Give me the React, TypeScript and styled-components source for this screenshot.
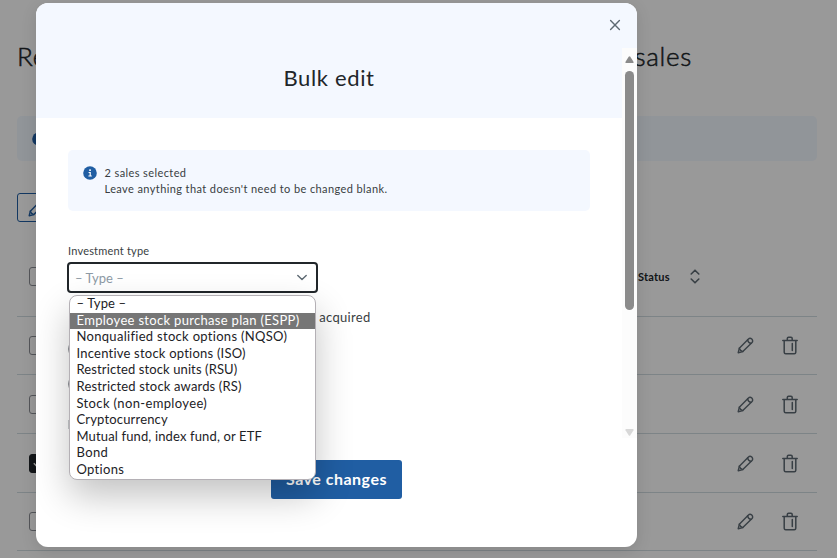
import React from "react";
import styled, { createGlobalStyle } from "styled-components";

const GlobalStyle = createGlobalStyle`
  *, *::before, *::after { box-sizing: border-box; }
  html, body { margin: 0; overflow: hidden; }
  body { font-family: Lato, "Liberation Sans", sans-serif; color: #21262a; background: #fff; }
  svg { display: block; flex: none; }
`;

const Screen = styled.div`
  position: relative;
  width: 837px;
  height: 558px;
  overflow: hidden;
`;

const Page = styled.main`
  display: flex;
  flex-direction: column;
  padding: 0 20px 0 17px;
`;

const PageTitle = styled.h1`
  display: flex;
  justify-content: space-between;
  width: 675px;
  height: 116px;
  margin: 0;
  padding-top: 39px;
  font-size: 26px;
  line-height: 34px;
  font-weight: 300;
  letter-spacing: 0.7px;
  -webkit-text-stroke: 0.5px #21262a;
`;

const PageNotice = styled.div`
  display: flex;
  align-items: center;
  height: 45px;
  padding-left: 15px;
  border-radius: 5px;
  background: #f2f8ff;
`;

const EditButton = styled.button`
  display: flex;
  align-items: center;
  width: 60px;
  height: 29px;
  margin: 32px 0 16px;
  padding: 2px 0 0 10px;
  border: 1px solid #205ea3;
  border-radius: 3px;
  background: transparent;
  color: #205ea3;
`;

const TableRow = styled.div<{ $height: number }>`
  display: flex;
  align-items: center;
  height: ${(p) => p.$height}px;
  padding: 0 19.5px 0 12px;
  border-bottom: 1px solid #d0dde1;
  color: #5e6a73;
`;

const TableHead = styled(TableRow)`
  padding-bottom: 1px;
`;

const Checkbox = styled.span<{ $checked?: boolean }>`
  display: flex;
  align-items: center;
  justify-content: center;
  width: 19px;
  height: 19px;
  border: 1px solid ${(p) => (p.$checked ? "#21262a" : "#8d9096")};
  border-radius: 3px;
  background: ${(p) => (p.$checked ? "#21262a" : "transparent")};
  color: #fff;
`;

const StatusHead = styled.div`
  display: flex;
  align-items: center;
  justify-content: space-between;
  width: 62px;
  margin-left: 590px;
  font-size: 11px;
  font-weight: 700;
  letter-spacing: 0.2px;
  color: #21262a;
`;

const RowActions = styled.div`
  display: flex;
  align-items: center;
  gap: 28px;
  margin-left: auto;
`;

const Backdrop = styled.div`
  position: absolute;
  inset: 0;
  padding: 3px 0 0 36px;
  background: rgba(0, 0, 0, 0.4);
`;

const Dialog = styled.section`
  display: flex;
  flex-direction: column;
  width: 601px;
  height: 544px;
  border-radius: 12px;
  overflow: hidden;
  background: #fff;
`;

const DialogShadow = styled.div`
  width: 601px;
  border-radius: 12px;
  box-shadow: 0 4px 16px rgba(0, 0, 0, 0.12);
`;

const DialogTop = styled.div`
  display: flex;
  justify-content: flex-end;
  height: 45px;
  padding: 15px 15px 0 0;
  background: #f4f8ff;
  color: #5e6a73;
`;

const DialogScroll = styled.div`
  display: grid;
  grid-template-columns: 586px 15px;
  height: 390px;
`;

const DialogTitle = styled.h2`
  height: 70px;
  margin: 0;
  padding-top: 15px;
  background: #f4f8ff;
  text-align: center;
  font-size: 22px;
  line-height: 30px;
  font-weight: 400;
  letter-spacing: 0.65px;
`;

const DialogBody = styled.div`
  display: flex;
  flex-direction: column;
  padding: 32px 32px 0;
`;

const Notice = styled.div`
  display: flex;
  gap: 7.5px;
  height: 61px;
  padding: 16px 15px 0;
  border-radius: 5px;
  background: #f4f8ff;
`;

const NoticeText = styled.p`
  margin: -1px 0 0;
  font-size: 11px;
  line-height: 16px;
  letter-spacing: 0.4px;
  color: #393e42;
`;

const FieldLabel = styled.label`
  margin-top: 33px;
  font-size: 11px;
  line-height: 14px;
  letter-spacing: 0.2px;
  color: #393e42;
`;

const SelectBox = styled.div`
  display: flex;
  align-items: center;
  justify-content: space-between;
  width: 251px;
  height: 31px;
  margin: 4px 0 0 -1px;
  padding: 0 9px 0 6px;
  border: 2px solid #21262a;
  border-radius: 4px;
  font-size: 13px;
  color: #8d9aa5;
`;

const Question = styled.p`
  width: 302.5px;
  margin: 16px 0 0;
  text-align: right;
  font-size: 13px;
  line-height: 16px;
  letter-spacing: 0.3px;
  color: #393e42;
`;

const RadioList = styled.div`
  display: flex;
  flex-direction: column;
  gap: 17px;
  margin-top: 15px;
`;

const Radio = styled.span`
  width: 18px;
  height: 18px;
  border: 1px solid #8d9096;
  border-radius: 50%;
`;

const DisabledField = styled.span`
  width: 120px;
  height: 9px;
  margin-top: 27px;
  border: 1px solid #c9cccf;
`;

const Scrollbar = styled.div`
  display: flex;
  flex-direction: column;
  align-items: center;
  padding-top: 8px;
  background: #fcfcfc;
`;

const Thumb = styled.span`
  width: 9px;
  height: 239px;
  margin: 8px 0 119px;
  border-radius: 5px;
  background: #8b8b8b;
`;

const DialogFooter = styled.div`
  display: flex;
  justify-content: center;
  padding-top: 22px;
`;

const SaveButton = styled.button`
  width: 131px;
  height: 39px;
  padding: 0 0 2px;
  border: 0;
  border-radius: 3px;
  background: #205ea3;
  color: #fff;
  font-family: inherit;
  font-size: 16px;
  font-weight: 700;
  letter-spacing: 0.5px;
`;

const OptionList = styled.ul`
  position: absolute;
  left: 69px;
  top: 295px;
  width: 247px;
  height: 185px;
  margin: 0;
  padding: 0;
  border: 1px solid #b4b0b5;
  border-radius: 8px;
  list-style: none;
  background: #fff;
  box-shadow: 0 16px 36px rgba(0, 0, 0, 0.24);
`;

const Option = styled.li<{ $active?: boolean; $track: number }>`
  height: 16.6px;
  padding-left: 6.5px;
  font-size: 13px;
  line-height: 15.6px;
  white-space: nowrap;
  letter-spacing: ${(p) => p.$track}px;
  background: ${(p) => (p.$active ? "#767676" : "transparent")};
  color: ${(p) => (p.$active ? "#fff" : "#1d2226")};
`;

const options: { label: string; track: number; active?: boolean }[] = [
  { label: "– Type –", track: 0.1 },
  { label: "Employee stock purchase plan (ESPP)", track: 0.31, active: true },
  { label: "Nonqualified stock options (NQSO)", track: 0.3 },
  { label: "Incentive stock options (ISO)", track: 0.22 },
  { label: "Restricted stock units (RSU)", track: 0.11 },
  { label: "Restricted stock awards (RS)", track: 0.16 },
  { label: "Stock (non-employee)", track: 0.36 },
  { label: "Cryptocurrency", track: 0.17 },
  { label: "Mutual fund, index fund, or ETF", track: 0.14 },
  { label: "Bond", track: 0.35 },
  { label: "Options", track: 0.3 },
];

const rows = [
  { height: 58, checked: false },
  { height: 59, checked: false },
  { height: 59, checked: true },
  { height: 58, checked: false },
];

const InfoIcon = () => (
  <svg width="14" height="14" viewBox="0 0 14 14">
    <circle cx="7" cy="7" r="6.8" fill="#205ea3" />
    <rect x="6.2" y="3.3" width="1.7" height="1.7" rx=".5" fill="#fff" />
    <path d="M5.6 6.5H7.2V10M5.4 10H8.8" fill="none" stroke="#fff" strokeWidth="1.2" />
  </svg>
);

const PencilIcon = () => (
  <svg width="17" height="17" viewBox="0 0 17 17" fill="none" stroke="currentColor" strokeWidth="1.4" strokeLinejoin="round" strokeLinecap="round">
    <path d="M1.2 15.7 2.3 11.3 11.2 2.2Q13 .5 14.8 2.1 16.5 3.9 14.8 5.8L5.8 14.6Z" />
    <path d="M10.6 2.8Q11 5.8 14.2 6.4M2.3 11.3Q3 14 5.8 14.6" />
  </svg>
);

const TrashIcon = () => (
  <svg width="16" height="19" viewBox="0 0 16 19" fill="none" stroke="currentColor" strokeWidth="1.5" strokeLinejoin="round" strokeLinecap="round">
    <path d="M.8 4.4H15.2M5.3 4.2V2.4Q5.3 1.2 6.5 1.2H9Q10.2 1.2 10.2 2.4V4.2M2.2 4.6V16.3Q2.2 17.8 3.7 17.8H12.3Q13.8 17.8 13.8 16.3V4.6M10.3 7.6V14.6" />
  </svg>
);

const SortIcon = () => (
  <svg width="10" height="15" viewBox="0 0 10 15" fill="none" stroke="#5e6a73" strokeWidth="1.6" strokeLinecap="round" strokeLinejoin="round">
    <path d="M1.2 5 5 1.2 8.8 5M1.2 10 5 13.8 8.8 10" />
  </svg>
);

const ChevronIcon = () => (
  <svg width="10" height="7" viewBox="0 0 10 7" fill="none" stroke="#5e6a73" strokeWidth="1.4" strokeLinecap="round" strokeLinejoin="round">
    <path d="M.8 1.4 5 5.6 9.2 1.4" />
  </svg>
);

const CloseIcon = () => (
  <svg width="14" height="14" viewBox="0 0 14 14" stroke="currentColor" strokeWidth="1.4" strokeLinecap="round">
    <path d="M2.6 2.6 11.4 11.4M11.4 2.6 2.6 11.4" />
  </svg>
);

const CheckIcon = () => (
  <svg width="11" height="9" viewBox="0 0 11 9" fill="none" stroke="currentColor" strokeWidth="1.4">
    <path d="M.8 4.2 4 7.4 10 1.2" />
  </svg>
);

const ArrowUp = () => (
  <svg width="9" height="7" viewBox="0 0 10 7" preserveAspectRatio="none" fill="#8b8b8b">
    <path d="M4.1.7Q5-.4 5.9.7L9.4 5.8Q9.8 7 8.8 7H1.2Q.2 7 .6 5.8Z" />
  </svg>
);

const ArrowDown = () => (
  <svg width="9" height="7" viewBox="0 0 10 7" preserveAspectRatio="none" fill="#d8d8d8">
    <path d="M4.1 6.3Q5 7.4 5.9 6.3L9.4 1.2Q9.8 0 8.8 0H1.2Q.2 0 .6 1.2Z" />
  </svg>
);

export default function App() {
  return (
    <Screen>
      <GlobalStyle />
      <Page>
        <PageTitle>
          <span>Review</span>
          <span>sales</span>
        </PageTitle>
        <PageNotice>
          <InfoIcon />
        </PageNotice>
        <EditButton aria-label="Edit">
          <PencilIcon />
        </EditButton>
        <TableHead $height={79}>
          <Checkbox />
          <StatusHead>
            Status
            <SortIcon />
          </StatusHead>
        </TableHead>
        {rows.map((row, i) => (
          <TableRow key={i} $height={row.height}>
            <Checkbox $checked={row.checked}>{row.checked && <CheckIcon />}</Checkbox>
            <RowActions>
              <PencilIcon />
              <TrashIcon />
            </RowActions>
          </TableRow>
        ))}
      </Page>
      <Backdrop>
        <DialogShadow>
          <Dialog>
            <DialogTop>
              <CloseIcon />
            </DialogTop>
            <DialogScroll>
              <div>
                <DialogTitle>Bulk edit</DialogTitle>
                <DialogBody>
                  <Notice>
                    <InfoIcon />
                    <NoticeText>
                      2 sales selected
                      <br />
                      Leave anything that doesn't need to be changed blank.
                    </NoticeText>
                  </Notice>
                  <FieldLabel>Investment type</FieldLabel>
                  <SelectBox>
                    – Type –
                    <ChevronIcon />
                  </SelectBox>
                  <Question>acquired</Question>
                  <RadioList>
                    <Radio />
                    <Radio />
                  </RadioList>
                  <DisabledField />
                </DialogBody>
              </div>
              <Scrollbar>
                <ArrowUp />
                <Thumb />
                <ArrowDown />
              </Scrollbar>
            </DialogScroll>
            <DialogFooter>
              <SaveButton>Save changes</SaveButton>
            </DialogFooter>
          </Dialog>
        </DialogShadow>
      </Backdrop>
      <OptionList>
        {options.map((o) => (
          <Option key={o.label} $active={o.active} $track={o.track}>
            {o.label}
          </Option>
        ))}
      </OptionList>
    </Screen>
  );
}
